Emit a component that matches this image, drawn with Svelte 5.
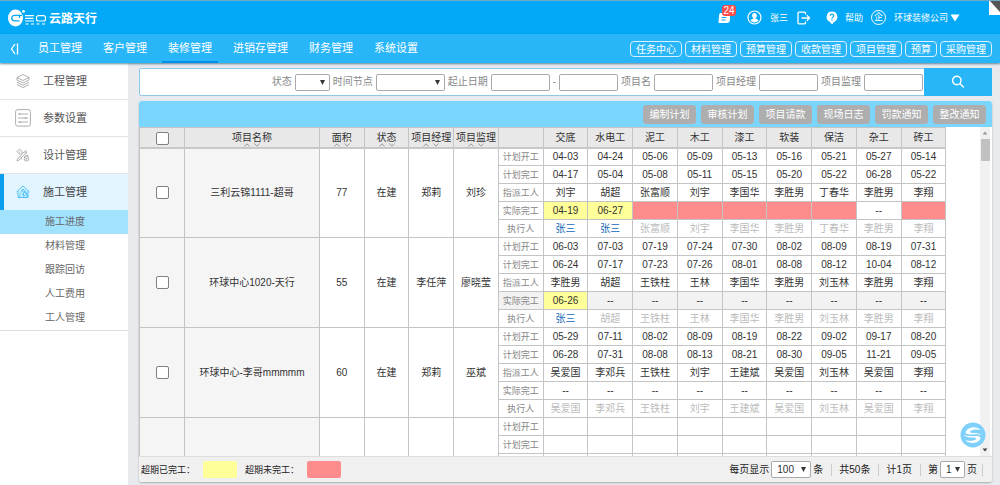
<script>
  const nav = ['员工管理', '客户管理', '装修管理', '进销存管理', '财务管理', '系统设置'];
  const quick = ['任务中心', '材料管理', '预算管理', '收款管理', '项目管理', '预算', '采购管理'];
  const menu = [
    { name: '工程管理', icon: 'layers' },
    { name: '参数设置', icon: 'params' },
    { name: '设计管理', icon: 'design' },
    { name: '施工管理', icon: 'build' }
  ];
  const sub = ['施工进度', '材料管理', '跟踪回访', '人工费用', '工人管理'];
  const tools = ['编制计划', '审核计划', '项目请款', '现场日志', '罚款通知', '整改通知'];
  const info = ['项目名称', '面积', '状态', '项目经理', '项目监理'];
  const stages = ['交底', '水电工', '泥工', '木工', '漆工', '软装', '保洁', '杂工', '砖工'];
  const labels = ['计划开工', '计划完工', '指派工人', '实际完工', '执行人'];
  const blank = Array(9).fill('');
  const split = (s) => s.split(' ');
  const projects = [
    {
      name: '三利云锦1111-超哥', area: '77', state: '在建', manager: '郑莉', supervisor: '刘珍', done: 2,
      rows: [
        split('04-03 04-24 05-06 05-09 05-13 05-16 05-21 05-27 05-14'),
        split('04-17 05-04 05-08 05-11 05-15 05-20 05-22 06-28 05-22'),
        split('刘宇 胡超 张富顺 刘宇 李国华 李胜男 丁春华 李胜男 李翔'),
        ['04-19', '06-27', '', '', '', '', '', '--', ''],
        split('张三 张三 张富顺 刘宇 李国华 李胜男 丁春华 李胜男 李翔')
      ]
    },
    {
      name: '环球中心1020-天行', area: '55', state: '在建', manager: '李任萍', supervisor: '廖晓莹', done: 1, hover: true,
      rows: [
        split('06-03 07-03 07-19 07-24 07-30 08-02 08-09 08-19 07-31'),
        split('06-24 07-17 07-23 07-26 08-01 08-08 08-12 10-04 08-12'),
        split('李胜男 胡超 王铁柱 王林 李国华 李胜男 刘玉林 李胜男 李翔'),
        split('06-26 -- -- -- -- -- -- -- --'),
        split('张三 胡超 王铁柱 王林 李国华 李胜男 刘玉林 李胜男 李翔')
      ]
    },
    {
      name: '环球中心-李哥mmmmm', area: '60', state: '在建', manager: '郑莉', supervisor: '巫斌', done: 0,
      rows: [
        split('05-29 07-11 08-02 08-09 08-19 08-22 09-02 09-17 08-20'),
        split('06-28 07-31 08-08 08-13 08-21 08-30 09-05 11-21 09-05'),
        split('吴爱国 李邓兵 王铁柱 刘宇 王建斌 吴爱国 刘玉林 吴爱国 李翔'),
        split('-- -- -- -- -- -- -- -- --'),
        split('吴爱国 李邓兵 王铁柱 刘宇 王建斌 吴爱国 刘玉林 吴爱国 李翔')
      ]
    },
    { name: '', area: '', state: '', manager: '', supervisor: '', done: 0, empty: true, rows: [blank, blank, blank, blank, blank] }
  ];

  function tone(p, r, c) {
    if (p.empty) return '';
    if (r === 3) {
      if (c < p.done) return 'late-done';
      return p.rows[r][c] === '' ? 'late-open' : '';
    }
    if (r === 4) return c < p.done ? 'person' : 'pending';
    return '';
  }
</script>

<div class="page">
  <header class="top">
    <div class="logo">
      <svg width="40" height="20" viewBox="0 0 40 20" aria-hidden="true">
        <ellipse cx="7.5" cy="10" rx="7.5" ry="8.5" fill="#fff" />
        <path d="M14 7.4H6.500a2.700 2.700 0 0 0 0 5.400H11.500M11.500 10V7.400" fill="none" stroke="#03a9f7" stroke-width="1.3" />
        <circle cx="15.500" cy="3.4" r="1.4" fill="#fff" />
        <path d="M17 7.600h9M17 10.300h8.500M17 13h9M30.500 7.600h5a2 2 0 0 1 2 2v1.400a2 2 0 0 1-2 2h-5a2 2 0 0 1-2-2v-1.400a2 2 0 0 1 2-2z" fill="none" stroke="#fff" stroke-width="1.200" />
        <path d="M17.500 16h3M23 16h3M28.500 16h3M34 16h3" stroke="#fff" stroke-width="1.600" opacity=".7" />
      </svg>
      <strong>云路天行</strong>
    </div>
    <div class="account">
      <a class="msg" href="#messages" aria-label="消息">
        <svg width="13" height="12" viewBox="0 0 13 12"><path d="M2 1h8a2 2 0 0 1 2 2v4.500A3.500 3.500 0 0 1 8.500 11H0.500L1 3z" fill="#fff" /><path d="M3.500 5.500h5M3.500 8h4" stroke="#03a9f7" /></svg>
        <span class="badge">24</span>
      </a>
      <a class="user" href="#user">
        <svg width="15" height="15" viewBox="0 0 15 15"><circle cx="7.500" cy="7.500" r="6.500" fill="none" stroke="#fff" stroke-width="1.200" /><path d="M7.500 3a2.300 2.600 0 0 1 1.200 4.900v.8c1.200.4 2.500.8 2.800 1.800a5 5 0 0 1-8 0c.3-1 1.600-1.400 2.800-1.800v-.8A2.300 2.600 0 0 1 7.500 3z" fill="#fff" /></svg>
        <span>张三</span>
      </a>
      <a class="out" href="#logout" aria-label="退出">
        <svg width="14" height="14" viewBox="0 0 14 14" fill="none" stroke="#fff" stroke-width="1.300"><path d="M8.500 3.500V2.200a1 1 0 0 0-1-1H2a1 1 0 0 0-1 1v9.600a1 1 0 0 0 1 1h5.500a1 1 0 0 0 1-1v-1.300M4.500 7h8M9.800 4.200 12.600 7 9.800 9.800" /></svg>
      </a>
      <a class="help" href="#help">
        <svg width="12" height="14" viewBox="0 0 12 14"><path d="M6 .5a5.400 5.400 0 0 1 2 10.400L6 13.500 4 10.900A5.400 5.400 0 0 1 6 .5z" fill="#fff" /><path d="M4.300 4.700a1.700 1.600 0 1 1 2.500 1.500c-.6.300-.8.600-.8 1.200M6 8.300v1.100" fill="none" stroke="#03a9f7" stroke-width="1.200" /></svg>
        <span>帮助</span>
      </a>
      <a class="firm" href="#company"><span class="ring">企</span><span>环球装修公司</span>
        <svg width="10" height="8" viewBox="0 0 10 8"><path d="M.5.500h9L5 7.500z" fill="#fff" /></svg>
      </a>
    </div>
    <svg class="fold" width="11" height="14" viewBox="0 0 11 14" aria-hidden="true"><path d="M0 0h11v14H0z" fill="#fff" /><path d="M1 0h10v11z" fill="#555" /></svg>
  </header>

  <div class="navbar">
    <button class="collapse" aria-label="收起菜单">
      <svg width="10" height="12" viewBox="0 0 10 12" fill="none" stroke="#fff" stroke-width="1.300"><path d="M5 1 1.500 6 5 11M7.500 .5v11" /></svg>
    </button>
    <nav>
      {#each nav as n}<a href="#nav" class:on={n === '装修管理'}>{n}</a>{/each}
    </nav>
    <div class="quick">
      {#each quick as q}<button>{q}</button>{/each}
    </div>
  </div>

  <div class="body">
    <aside>
      {#each menu as m}
        <a class="item" class:on={m.icon === 'build'} href="#menu">
          {#if m.icon === 'layers'}
            <svg width="16" height="16" viewBox="0 0 16 16"><path d="M8 1.500 14 4.500 8 7.500 2 4.500zM2 7l6 3 6-3M2 9.300l6 3 6-3M2 11.600l6 3 6-3M2 4.500V7M14 4.500V7" /></svg>
          {:else if m.icon === 'params'}
            <svg width="16" height="18" viewBox="0 0 16 18"><rect x=".6" y=".6" width="14.800" height="16.500" rx="2" /><path d="M3 5h10M3 9h10M3 13h10M5 4v2M10.500 8v2M5 12v2" /></svg>
          {:else if m.icon === 'design'}
            <svg width="16" height="16" viewBox="0 0 16 16"><path d="M3.500 13.500 2 14l.5-2 8-8.500 1.500 1.500zM9.500 5l1.500 1.500M2 4.500 4.500 2l3 3-2.500 2.500zM4 4.500l1 .8M9 10l3-2 1.500 1.500M5 10.500l2 2" /><circle cx="11.500" cy="11.800" r="2.300" /><circle cx="11.500" cy="11.800" r=".6" /></svg>
          {:else}
            <svg width="16" height="16" viewBox="0 0 16 16"><path d="M3 7v6.500h10V7M1.500 8 8 2l6.500 6M5 13.500V9.500l3-3 1.500 1.500-2 2.500 2 3M10 7l2 2.500v3.500M5.500 7.500 8 5l3 2.500" /><circle cx="9.500" cy="10" r="1.500" /></svg>
          {/if}
          <span>{m.name}</span>
        </a>
      {/each}
      <div class="subs">
        {#each sub as s, i}<a href="#sub" class:on={i === 0}>{s}</a>{/each}
      </div>
    </aside>

    <main>
      <form class="search" onsubmit={(e) => e.preventDefault()}>
        <div class="fields">
          <label for="state">状态</label><select id="state" class="short"><option></option></select>
          <label for="node">时间节点</label><select id="node" class="long"><option></option></select>
          <label for="from">起止日期</label><input id="from" type="text" />
          <label for="to">-</label><input id="to" type="text" />
          <label for="pname">项目名</label><input id="pname" type="text" />
          <label for="mgr">项目经理</label><input id="mgr" type="text" />
          <label for="sup">项目监理</label><input id="sup" type="text" />
        </div>
        <button aria-label="搜索">
          <svg width="14" height="14" viewBox="0 0 14 14" fill="none" stroke="#fff" stroke-width="1.400"><circle cx="5.800" cy="5.500" r="4.200" /><path d="m8.800 8.600 4 4" /></svg>
        </button>
      </form>

      <section class="panel">
        <div class="tools">
          {#each tools as t}<button>{t}</button>{/each}
        </div>
        <div class="grid">
          <div class="view">
            <table>
              <colgroup>
                <col class="c-check" /><col class="c-name" />
                {#each Array(14) as _}<col />{/each}
              </colgroup>
              <thead>
                <tr>
                  <th><input type="checkbox" aria-label="全选" /></th>
                  {#each info as h}
                    <th>{h}<svg class="sort" width="16" height="4" viewBox="0 0 16 4" aria-hidden="true"><path d="M.5 3.500 3 .8l2.500 2.700M10.500.5 13 3.200 15.500.5" fill="none" stroke="#999" /></svg></th>
                  {/each}
                  <th></th>
                  {#each stages as h}<th>{h}</th>{/each}
                </tr>
              </thead>
              <tbody>
                {#each projects as p}
                  {#each labels as l, r}
                    <tr class:hover={p.hover && r === 3}>
                      {#if r === 0}
                        <td class="fixed" rowspan="5"><input type="checkbox" aria-label="选择项目" /></td>
                        <td class="fixed" rowspan="5">{p.name}</td>
                        <td rowspan="5">{p.area}</td>
                        <td rowspan="5">{p.state}</td>
                        <td rowspan="5">{p.manager}</td>
                        <td rowspan="5">{p.supervisor}</td>
                      {/if}
                      <td class="label">{p.empty && r > 1 ? '' : l}</td>
                      {#each p.rows[r] as v, c}<td class={tone(p, r, c)}>{v}</td>{/each}
                    </tr>
                  {/each}
                {/each}
              </tbody>
            </table>
          </div>
          <div class="bar" aria-hidden="true">
            <svg width="6" height="4" viewBox="0 0 6 4"><path d="M.5 3.500h5L3 .5z" fill="#999" /></svg>
            <div class="thumb"></div>
            <svg width="6" height="4" viewBox="0 0 6 4"><path d="M.5.500h5L3 3.500z" fill="#444" /></svg>
          </div>
          <button class="chat" aria-label="客服">
            <svg width="26" height="26" viewBox="0 0 26 26"><circle cx="13" cy="13" r="12.500" fill="#7fd1fb" /><path d="M20.500 8C17 4 8.500 4.500 6 9.500c-1 2.300 1 3 4.500 3 4.500 0 7.500-.6 12 .8-3.500-2.600-7-2.300-10-2.400-2.500-.2-3-1-2-1.900C12.500 7.300 16.500 7 20.500 8z" fill="#fff" /><path d="M5.500 18.200c3.500 4 12.500 3.500 14.800-1.300.8-2.200-1-3-4.500-2.900-4.500.1-8 .5-12.300-.9 3.500 2.700 7.200 2.400 10.200 2.500 2.500.2 3 1 2 1.900-2 1.500-6.200 1.700-10.200.7z" fill="#fff" /></svg>
          </button>
        </div>
        <footer>
          <div class="legend">
            <span>超期已完工：</span><i class="late-done"></i>
            <span>超期未完工：</span><i class="late-open"></i>
          </div>
          <div class="pager">
            <label for="size">每页显示</label>
            <select id="size" class="size"><option>100</option></select>
            <span class="cell">条</span>
            <span class="cell">共50条</span>
            <span class="cell">计1页</span>
            <label for="pg">第</label>
            <select id="pg" class="pg"><option>1</option></select>
            <span class="cell">页</span>
          </div>
        </footer>
      </section>
    </main>
  </div>
</div>

<style>
  :global(body) { background: #e9eaee; }
  .page {
    display: flex; flex-direction: column; height: 100vh; overflow: hidden;
    font: 10px/14px "Liberation Sans", "Noto Sans CJK SC", sans-serif; color: #333;
  }
  .page * { box-sizing: border-box; }
  a { color: inherit; text-decoration: none; }
  svg { display: block; flex: none; }
  button, input, select { font: inherit; margin: 0; padding: 0; border: 0; color: inherit; }

  .top {
    position: relative; display: flex; flex: none; align-items: center; justify-content: space-between;
    height: 34px; padding: 0 40px 0 8px; border-top: 1px solid #6fa9c9; background: #03a9f7; color: #fff; font-size: 9px;
  }
  .logo { display: flex; align-items: center; gap: 1px; font-size: 12px; line-height: 18px; }
  .logo strong { padding-top: 2px; }
  .account, .account a { display: flex; align-items: center; }
  .msg { position: relative; margin-right: 16px; }
  .badge {
    position: absolute; left: 4px; top: -7px; width: 14px; height: 11px; border-radius: 3px;
    background: #fb4b4b; font-size: 10px; line-height: 11px; text-align: center;
  }
  .user { gap: 8px; margin-right: 9px; }
  .out { margin-right: 15px; }
  .help { gap: 7px; margin-right: 8px; }
  .firm { gap: 2px; }
  .ring { width: 15px; height: 15px; margin-right: 6px; border: 1px solid #fff; border-radius: 50%; line-height: 13px; text-align: center; }
  .fold { position: absolute; right: 0; top: 0; }

  .navbar {
    position: relative; z-index: 1; display: flex; flex: none; align-items: center; height: 29px; padding: 0 8px 0 10px;
    background: #29b6f8; color: #fff; box-shadow: 0 1px 2px rgba(0, 60, 90, .6);
  }
  .collapse { background: none; margin-right: 12px; }
  nav { display: flex; align-self: stretch; gap: 9px; font-size: 11px; }
  nav a { padding: 1px 6px 0; line-height: 26px; border-bottom: 2px solid transparent; }
  nav a.on { border-color: #0091ea; }
  .quick { display: flex; gap: 3px; margin-left: auto; }
  .quick button { height: 16px; padding: 1px 5px 0; border: 1px solid #d8f1ff; border-radius: 4px; background: none; line-height: 13px; }

  .body { display: flex; flex: 1; min-height: 0; }
  aside { flex: none; width: 128px; background: #fff; box-shadow: 1px 0 2px #aaa; }
  .item {
    display: flex; align-items: center; gap: 12px; height: 37px; padding-left: 15px;
    border-bottom: 1px solid #e4e4e4; color: #555; font-size: 11px;
  }
  .item svg { fill: none; stroke: #999; stroke-width: .8; }
  .item.on { height: 36px; padding-left: 11px; border-left: 4px solid #0a9fee; border-bottom: 0; background: #e1f4ff; color: #444; }
  .item.on svg { stroke: #29b6f8; }
  .subs { border-bottom: 1px solid #ddd; }
  .subs a { display: block; height: 24px; padding-left: 45px; line-height: 24px; color: #666; }
  .subs a.on { background: #a1e2ff; }

  main { display: flex; flex-direction: column; flex: 1; min-width: 0; gap: 5px; padding: 5px 8px 3px 11px; background: #e9eaee; }
  .search { display: flex; flex: none; height: 28px; border: 1px solid #90c8e8; border-radius: 2px; background: #fff; color: #888; }
  .fields { display: flex; flex: 1; align-items: center; justify-content: flex-end; gap: 3px; padding-right: 2px; }
  .search input, select { height: 17px; border: 1px solid #aaa; border-radius: 2px; background-color: #fff; }
  .search input { width: 59px; min-width: 0; }
  .search > button { width: 68px; display: grid; place-items: center; margin: -1px; background: #29b6f8; }
  select {
    appearance: none; padding-left: 5px; color: #333;
    background: #fff url("data:image/svg+xml,%3Csvg xmlns='http://www.w3.org/2000/svg' width='5' height='5'%3E%3Cpath d='M0 0h5L2.5 5z' fill='%23333'/%3E%3C/svg%3E") no-repeat right 4px center;
  }
  .short { width: 35px; }
  .long { width: 69px; }

  .panel { display: flex; flex-direction: column; flex: 1; min-height: 0; border-radius: 3px; background: #fff; box-shadow: 0 1px 2px #aaa; }
  .tools {
    display: flex; flex: none; align-items: center; justify-content: flex-end; gap: 5px;
    height: 26px; padding-right: 6px; border-radius: 3px 3px 0 0; background: #7bd6ff;
  }
  .tools button { width: 53px; height: 19px; padding-top: 2px; border-radius: 3px; background: #aeaeae; color: #fff; }
  .grid { position: relative; display: flex; flex: 1; min-height: 0; }
  .view { flex: 1; overflow: hidden; }
  .bar { display: flex; flex-direction: column; align-items: center; width: 10px; margin-right: 2px; padding: 4px 0; background: #f1f1f1; }
  .thumb { width: 9px; height: 22px; margin: 4px 0 auto; background: #c1c1c1; }
  .chat { position: absolute; right: 6px; bottom: 8px; background: none; }

  table { width: 96%; table-layout: fixed; border-collapse: collapse; text-align: center; }
  .c-check { width: 45px; }
  .c-name { width: 135px; }
  th, td { height: 18px; padding: 0; border: 1px solid #c4c4c4; line-height: 14px; white-space: nowrap; }
  th { position: relative; height: 20px; padding-top: 2px; border-bottom: 2px solid #c8c8c8; background: #e8e8e8; font-weight: 400; }
  .sort { position: absolute; left: 50%; bottom: 0; margin-left: -8px; }
  .fixed { background: #f5f5f5; }
  .label { color: #888; font-size: 9px; }
  .hover td:not(.late-done) { background: #f2f2f2; }
  .late-done { background: #ffff99; }
  .late-open { background: #ff8c8c; }
  .person { color: #1167b8; }
  .pending { color: #bbb; }
  input[type='checkbox'] {
    appearance: none; display: block; width: 13px; height: 13px; margin: 0 auto;
    border: 1px solid #808080; border-radius: 2px; background: #fff;
  }

  footer {
    display: flex; flex: none; align-items: center; justify-content: space-between; height: 26px;
    padding: 0 9px 0 2px; border-top: 1px solid #ddd; border-radius: 0 0 3px 3px; background: #f0f0f0; color: #222;
  }
  .legend { display: flex; align-items: center; gap: 8px; font-size: 9px; }
  .legend i { width: 34px; height: 17px; border-radius: 2px; }
  .pager { display: flex; align-items: center; gap: 2px; }
  .size { width: 40px; }
  .pg { width: 25px; }
  .cell { padding-right: 8px; margin-right: 5px; border-right: 1px solid #ccc; line-height: 12px; }
  .cell:last-child { padding-right: 5px; margin-right: 0; }
</style>
